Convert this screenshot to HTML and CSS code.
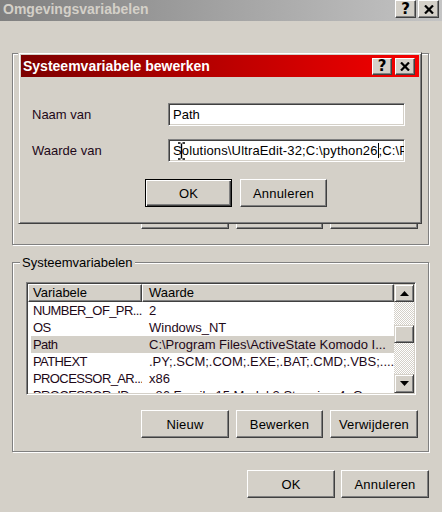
FILE: index.html
```html
<!DOCTYPE html>
<html>
<head>
<meta charset="utf-8">
<link rel="stylesheet" href="styles.css">
</head>
<body>
<div class="titlebar">
  <span class="title">Omgevingsvariabelen</span>
  <div class="tb-buttons">
    <span class="cap-btn outer"><span class="q">?</span></span>
    <span class="cap-btn outer"><svg width="10" height="9" viewBox="0 0 10 9"><path d="M1 0.5 L9 8.5 M9 0.5 L1 8.5" stroke="#000" stroke-width="2.2" fill="none"/></svg></span>
  </div>
</div>

<div class="content">
  <div class="group g1">
    <span class="legend">Gebruikersvariabelen voor Stijn</span>
    <div class="btnrow">
      <button class="btn w88">Nieuw</button>
      <button class="btn w87">Bewerken</button>
      <button class="btn w88">Verwijderen</button>
    </div>
  </div>

  <div class="group g2">
    <span class="legend">Systeemvariabelen</span>
    <div class="list">
      <div class="cols">
        <div class="hdr">
          <div class="hcell c1">Variabele</div>
          <div class="hcell c2">Waarde</div>
        </div>
        <div class="row"><span class="c1">NUMBER_OF_PR...</span><span class="c2">2</span></div>
        <div class="row"><span class="c1">OS</span><span class="c2">Windows_NT</span></div>
        <div class="row sel"><span class="c1">Path</span><span class="c2">C:\Program Files\ActiveState Komodo I...</span></div>
        <div class="row"><span class="c1">PATHEXT</span><span class="c2">.PY;.SCM;.COM;.EXE;.BAT;.CMD;.VBS;....</span></div>
        <div class="row"><span class="c1">PROCESSOR_AR...</span><span class="c2">x86</span></div>
        <div class="row"><span class="c1">PROCESSOR_ID...</span><span class="c2">x86 Family 15 Model 2 Stepping 4, Gen...</span></div>
      </div>
      <div class="vscroll">
        <span class="sb-btn up"><svg width="9" height="5" viewBox="0 0 9 5"><polygon points="4.5,0 9,5 0,5" fill="#000"/></svg></span>
        <span class="sb-track t1"></span>
        <span class="sb-thumb"></span>
        <span class="sb-track t2"></span>
        <span class="sb-btn down"><svg width="9" height="5" viewBox="0 0 9 5"><polygon points="0,0 9,0 4.5,5" fill="#000"/></svg></span>
      </div>
    </div>
    <div class="btnrow">
      <button class="btn w88">Nieuw</button>
      <button class="btn w87">Bewerken</button>
      <button class="btn w88">Verwijderen</button>
    </div>
  </div>

  <div class="footer">
    <button class="btn w88">OK</button>
    <button class="btn w88">Annuleren</button>
  </div>
</div>

<div class="dialog">
  <div class="dlg-title">
    <span class="dlg-caption">Systeemvariabele bewerken</span>
    <div class="tb-buttons dlg-btns">
      <span class="cap-btn"><span class="q">?</span></span>
      <span class="cap-btn"><svg width="10" height="9" viewBox="0 0 10 9"><path d="M1 0.5 L9 8.5 M9 0.5 L1 8.5" stroke="#000" stroke-width="2.2" fill="none"/></svg></span>
    </div>
  </div>
  <div class="dlg-body">
    <label class="lbl">Naam van</label>
    <div class="field">Path</div>
    <label class="lbl">Waarde van</label>
    <div class="field wide">Solutions\UltraEdit-32;C:\python26<span class="caret"></span>;C:\P
      <svg class="ibeam" width="9" height="18" viewBox="0 0 9 18"><path d="M1 1 H3.5 M5.5 1 H8 M4.5 1.5 V16.5 M1 17 H3.5 M5.5 17 H8" stroke="#000" stroke-width="1.4" fill="none"/></svg>
    </div>
  </div>
  <div class="dlg-actions">
    <button class="btn default w87">OK</button>
    <button class="btn w87">Annuleren</button>
  </div>
</div>
</body>
</html>
```

FILE: styles.css
```css
html, body {
  margin: 0;
  padding: 0;
}
body {
  width: 442px;
  height: 512px;
  overflow: hidden;
  position: relative;
  background: #d4d0c8;
  font-family: "Liberation Sans", Arial, sans-serif;
  font-size: 13px;
  color: #000;
}

/* outer title bar */
.titlebar {
  height: 21px;
  display: flex;
  justify-content: space-between;
  align-items: flex-start;
  background: linear-gradient(to right, #808080, #c4c4c4);
}
.title {
  font-weight: bold;
  font-size: 14px;
  color: #d4d0c8;
  line-height: 19px;
  padding-left: 3px;
}
.tb-buttons {
  display: flex;
  gap: 2px;
  padding-right: 3px;
}
.cap-btn {
  box-sizing: border-box;
  width: 20px;
  height: 17px;
  display: flex;
  align-items: center;
  justify-content: center;
  background: #d4d0c8;
  border: 1px solid;
  border-color: #fff #404040 #404040 #fff;
  box-shadow: inset -1px -1px #808080;
}
.cap-btn.outer {
  width: 21px;
  height: 18px;
}
.q {
  font-weight: bold;
  font-size: 15px;
  line-height: 15px;
  font-family: "DejaVu Sans", sans-serif;
}

/* main content */
.content {
  padding: 32px 13px 0 12px;
}
.group {
  position: relative;
  box-sizing: border-box;
  border: 1px solid #808080;
  box-shadow: inset 1px 1px #fff, 1px 1px #fff;
  display: flex;
  flex-direction: column;
}
.legend {
  align-self: flex-start;
  margin: -8px 0 0 7px;
  padding: 0 2px;
  line-height: 15px;
  background: #d4d0c8;
}
.g1 {
  height: 192px;
  padding: 0 10px 15px 0;
}
.g1 .legend {
  margin-top: -5px;
  margin-bottom: auto;
}
.g2 {
  margin-top: 17px;
  height: 190px;
  padding: 0 10px 13px 13px;
}
.g2 .legend {
  margin-left: -6px;
}
.btnrow {
  display: flex;
  justify-content: flex-end;
  gap: 7px;
}
.g2 .btnrow {
  margin-top: 15px;
}
.footer {
  display: flex;
  justify-content: flex-end;
  gap: 6px;
  margin-top: 18px;
}

/* buttons */
.btn {
  box-sizing: border-box;
  height: 28px;
  padding: 0;
  margin: 0;
  background: #d4d0c8;
  border: 1px solid;
  border-color: #fff #404040 #404040 #fff;
  box-shadow: inset -1px -1px #808080;
  font-family: inherit;
  font-size: 13px;
  letter-spacing: 0.2px;
  color: #000;
}
.w88 { width: 88px; }
.w87 { width: 87px; }
.btn.default {
  border: 1px solid #000;
  box-shadow: inset 1px 1px #fff, inset -1px -1px #404040, inset -2px -2px #808080;
}

/* list view */
.list {
  margin-top: 12px;
  width: 390px;
  height: 113px;
  box-sizing: border-box;
  border: 1px solid;
  border-color: #808080 #fff #fff #808080;
  box-shadow: inset 1px 1px #404040, inset -1px -1px #d4d0c8;
  padding: 1px;
  background: #fff;
  display: flex;
  overflow: hidden;
}
.cols {
  width: 366px;
  overflow: hidden;
  color: #1e0818;
}
.hdr {
  display: flex;
  height: 18px;
}
.hcell {
  box-sizing: border-box;
  height: 18px;
  background: #d4d0c8;
  border: 1px solid;
  border-color: #fff #404040 #404040 #fff;
  box-shadow: inset -1px -1px #808080;
  line-height: 16px;
  color: #000;
}
.hcell.c1 { width: 114px; padding-left: 4px; }
.hcell.c2 { width: 252px; padding-left: 6px; }
.row {
  display: flex;
  height: 17px;
  line-height: 17px;
  white-space: nowrap;
}
.row .c1 {
  width: 114px;
  padding-left: 5px;
  box-sizing: border-box;
  overflow: hidden;
  letter-spacing: -0.6px;
}
.row .c2 { width: 252px; padding-left: 7px; box-sizing: border-box; overflow: hidden; }
.row.sel {
  background: linear-gradient(to right, #fff 3px, #d4d0c8 3px);
}

/* scrollbar */
.vscroll {
  width: 20px;
  display: flex;
  flex-direction: column;
}
.sb-btn, .sb-thumb {
  box-sizing: border-box;
  width: 20px;
  background: #d4d0c8;
  border: 1px solid;
  border-color: #d4d0c8 #404040 #404040 #d4d0c8;
  box-shadow: inset 1px 1px #fff, inset -1px -1px #808080;
  display: flex;
  align-items: center;
  justify-content: center;
}
.sb-btn.up { height: 18px; }
.sb-btn.down { height: 19px; }
.sb-thumb { height: 18px; }
.sb-track {
  background-color: #d4d0c8;
  background-image: conic-gradient(#fff 25%, #d4d0c8 0 50%, #fff 0 75%, #d4d0c8 0);
  background-size: 2px 2px;
}
.t1 { height: 23px; }
.t2 { flex: 1; }

/* modal dialog */
.dialog {
  position: absolute;
  left: 18px;
  top: 52px;
  width: 404px;
  height: 172px;
  box-sizing: border-box;
  background: #d4d0c8;
  border: 1px solid;
  border-color: #d4d0c8 #404040 #404040 #d4d0c8;
  box-shadow: inset 1px 1px #fff, inset -1px -1px #808080;
  padding: 2px;
}
.dlg-title {
  height: 22px;
  display: flex;
  align-items: center;
  justify-content: space-between;
  background: linear-gradient(to right, #7c0000, #f60000);
  padding-left: 2px;
}
.dlg-caption {
  color: #fff;
  font-weight: bold;
  font-size: 14px;
}
.dlg-btns {
  gap: 3px;
  padding-right: 4px;
}
.dlg-body {
  display: grid;
  grid-template-columns: 136px 237px;
  row-gap: 13px;
  align-items: center;
  padding: 26px 0 0 11px;
}
.lbl {
  color: #1e0818;
}
.field {
  position: relative;
  box-sizing: border-box;
  height: 23px;
  line-height: 19px;
  border: 1px solid;
  border-color: #808080 #fff #fff #808080;
  box-shadow: inset 1px 1px #404040, inset -1px -1px #d4d0c8;
  background: #fff;
  padding: 1px 0 0 4px;
  white-space: nowrap;
  overflow: hidden;
}
.field.wide {
  letter-spacing: 0.15px;
}
.caret {
  display: inline-block;
  width: 0;
  height: 15px;
  border-left: 1px solid #000;
  vertical-align: -3px;
}
.ibeam {
  position: absolute;
  left: 8px;
  top: 2px;
}
.dlg-actions {
  display: flex;
  gap: 8px;
  padding: 17px 0 0 124px;
}
```
